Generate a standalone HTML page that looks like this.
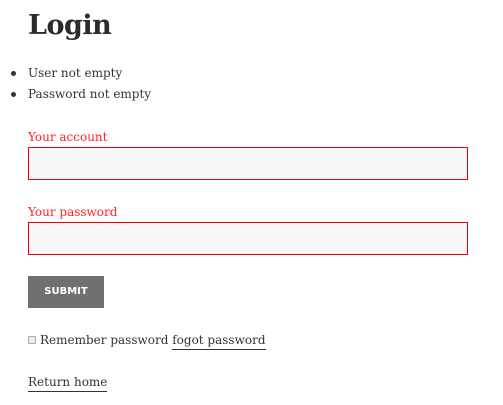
<!DOCTYPE html>
<html><head><style>
body{margin:0;width:503px;height:405px;background:#fff;font-family:"DejaVu Serif","Liberation Serif",serif;color:#333;position:relative;overflow:hidden}
.a{position:absolute;white-space:nowrap;font-size:12px;line-height:16px}
h1{position:absolute;left:28px;top:8px;margin:0;font-size:27px;line-height:36px;font-weight:bold;color:#2b2b2b;font-family:"DejaVu Serif",serif;letter-spacing:-0.5px}
.dot{position:absolute;width:5px;height:5px;border-radius:50%;background:#333}
.in{position:absolute;left:28px;width:438px;height:31px;border:1px solid #e00;background:#f7f7f7}
.red{color:#f22}
.btn{position:absolute;left:28px;top:276px;width:76px;height:32px;background:#707070;color:#fff;font:bold 10px "DejaVu Sans",sans-serif;text-align:center;line-height:32px}
u{text-decoration:none;border-bottom:1px solid #333;padding-bottom:2px}
.cb{position:absolute;left:28px;top:336px;width:6px;height:6px;border:1px solid #aaa;border-radius:1px;background:#eee}
</style></head><body>
<h1>Login</h1>
<div class="dot" style="left:11px;top:71px"></div>
<div class="a" style="left:28px;top:65px">User not empty</div>
<div class="dot" style="left:11px;top:92px"></div>
<div class="a" style="left:28px;top:86px">Password not empty</div>
<div class="a red" style="left:28px;top:129px">Your account</div>
<div class="in" style="top:147px"></div>
<div class="a red" style="left:28px;top:204px">Your password</div>
<div class="in" style="top:222px"></div>
<div class="btn">SUBMIT</div>
<div class="cb"></div>
<div class="a" style="left:40px;top:332px">Remember password <u>fogot password</u></div>
<div class="a" style="left:28px;top:374px"><u>Return home</u></div>
</body></html>
